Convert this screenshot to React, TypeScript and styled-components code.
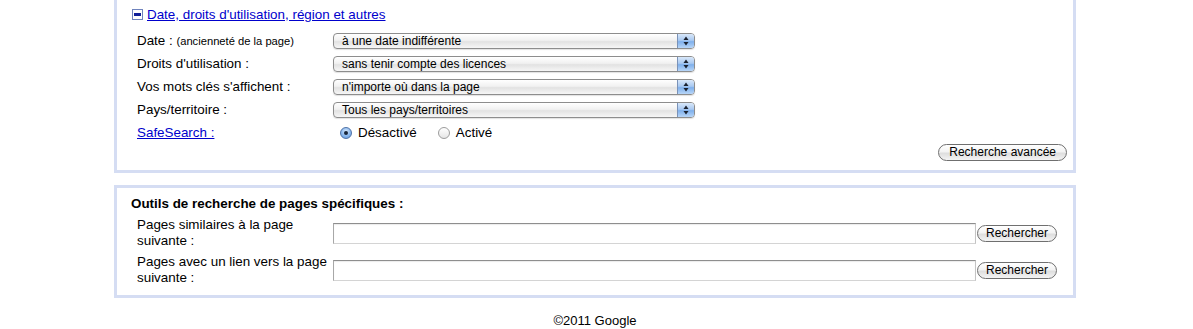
import React from "react";
import styled, { createGlobalStyle } from "styled-components";

const GlobalStyle = createGlobalStyle`
  html, body { margin: 0; padding: 0; background: #fff; }
  body {
    font-family: "Liberation Sans", Arial, sans-serif;
    font-size: 13.4px;
    color: #000;
  }
`;

const Page = styled.div`
  padding: 0 117px 0 114px;
`;

const Panel = styled.section<{ $openTop?: boolean }>`
  border: 3px solid #d5ddf3;
  ${(p) => (p.$openTop ? "border-top: none;" : "")}
  padding: ${(p) => (p.$openTop ? "5px 6px 9px 14px" : "8px 6px 9px 14px")};
  & + & { margin-top: 12px; }
`;

const Toggle = styled.div`
  display: flex;
  align-items: center;
  gap: 4px;
  height: 18px;
  padding-left: 1px;
`;

const Link = styled.a`
  color: #0000cc;
  text-decoration: underline;
  cursor: pointer;
  font-size: 13.4px;
`;

const FieldGrid = styled.div`
  display: grid;
  grid-template-columns: 196px 362px;
  grid-auto-rows: 23px;
  align-items: center;
  margin-top: 6px;
  padding-left: 6px;
`;

const Label = styled.div`
  font-size: 13.4px;
  white-space: nowrap;
`;

const Hint = styled.span`
  font-size: 11.2px;
`;

const SelectBox = styled.div`
  position: relative;
  display: flex;
  align-items: center;
  height: 16px;
  box-sizing: border-box;
  border: 1px solid #8d8d8d;
  border-radius: 4px;
  background: linear-gradient(#ffffff 0%, #f1f1f1 45%, #e2e2e2 55%, #f6f6f6 100%);
  box-shadow: 0 1px 1px rgba(0, 0, 0, 0.12);
  overflow: hidden;
`;

const SelectText = styled.span`
  flex: 1;
  padding-left: 8px;
  font-size: 12px;
  line-height: 14px;
`;

const ArrowBox = styled.span`
  width: 16px;
  height: 100%;
  display: flex;
  align-items: center;
  justify-content: center;
  border-left: 1px solid #7a92b8;
  background: linear-gradient(#d9e8fa 0%, #a9c9f1 45%, #7fb0ec 55%, #b8d6f8 100%);
`;

const RadioRow = styled.div`
  display: flex;
  align-items: center;
  padding-left: 7px;
`;

const RadioLabel = styled.label<{ $gapAfter?: number }>`
  display: flex;
  align-items: center;
  gap: 6px;
  font-size: 13.4px;
  margin-right: ${(p) => p.$gapAfter ?? 0}px;
`;

const RadioDot = styled.span<{ $checked?: boolean }>`
  width: 12px;
  height: 12px;
  box-sizing: border-box;
  border-radius: 50%;
  display: flex;
  align-items: center;
  justify-content: center;
  border: 1px solid ${(p) => (p.$checked ? "#4f73a8" : "#9c9c9c")};
  background: ${(p) =>
    p.$checked
      ? "radial-gradient(circle at 50% 35%, #d9e9fb 0%, #8ab8ee 55%, #5b93d8 100%)"
      : "linear-gradient(#ffffff, #e6e6e6)"};
  &::after {
    content: "";
    width: 4px;
    height: 4px;
    border-radius: 50%;
    background: ${(p) => (p.$checked ? "#17253a" : "transparent")};
  }
`;

const ButtonRow = styled.div`
  display: flex;
  justify-content: flex-end;
`;

const PillButton = styled.button<{ $pad?: number }>`
  height: 17px;
  box-sizing: border-box;
  padding: 0 ${(p) => p.$pad ?? 10}px;
  border: 1px solid #6f6f6f;
  border-radius: 9px;
  background: linear-gradient(#ffffff 0%, #f3f3f3 45%, #dedede 55%, #f4f4f4 100%);
  font-family: "Liberation Sans", Arial, sans-serif;
  font-size: 12px;
  line-height: 15px;
  color: #000;
  cursor: pointer;
`;

const Heading = styled.div`
  font-weight: bold;
  font-size: 13.4px;
  line-height: 16px;
`;

const ToolRow = styled.div`
  display: grid;
  grid-template-columns: 196px 643px auto;
  align-items: center;
  height: 32px;
  padding-left: 6px;
  margin-top: 5px;
`;

const WrapLabel = styled.div`
  font-size: 13.4px;
  line-height: 16px;
`;

const TextInput = styled.input`
  width: 643px;
  height: 21px;
  box-sizing: border-box;
  border: 1px solid;
  border-color: #8e8e8e #c4c4c4 #d4d4d4 #a8a8a8;
  padding: 0 3px;
  margin: 0;
  background: #fff;
  box-shadow: inset 0 1px 1px rgba(0, 0, 0, 0.08);
`;

const ButtonCell = styled.div`
  padding-left: 1px;
`;

const Footer = styled.footer`
  margin-top: 15px;
  text-align: center;
  font-size: 13px;
  line-height: 16px;
`;

const MinusIcon = () => (
  <svg width="11" height="11" viewBox="0 0 11 11" aria-hidden="true">
    <rect x="0.5" y="0.5" width="10" height="10" fill="#fff" stroke="#6f83bd" />
    <rect x="2" y="4" width="7" height="3" fill="#12209a" />
  </svg>
);

const UpDown = () => (
  <svg width="6" height="10" viewBox="0 0 6 10" aria-hidden="true">
    <polygon points="3,0.5 5.5,4 0.5,4" fill="#1b2230" />
    <polygon points="0.5,6 5.5,6 3,9.5" fill="#1b2230" />
  </svg>
);

const FakeSelect = ({ value }: { value: string }) => (
  <SelectBox>
    <SelectText>{value}</SelectText>
    <ArrowBox>
      <UpDown />
    </ArrowBox>
  </SelectBox>
);

const fields: { label: React.ReactNode; value: string }[] = [
  {
    label: (
      <>
        Date : <Hint>(ancienneté de la page)</Hint>
      </>
    ),
    value: "à une date indifférente",
  },
  { label: "Droits d'utilisation :", value: "sans tenir compte des licences" },
  { label: "Vos mots clés s'affichent :", value: "n'importe où dans la page" },
  { label: "Pays/territoire :", value: "Tous les pays/territoires" },
];

const tools = [
  "Pages similaires à la page suivante :",
  "Pages avec un lien vers la page suivante :",
];

export default function App() {
  return (
    <>
      <GlobalStyle />
      <Page>
        <Panel $openTop>
          <Toggle>
            <MinusIcon />
            <Link>Date, droits d'utilisation, région et autres</Link>
          </Toggle>
          <FieldGrid>
            {fields.map((f, i) => (
              <React.Fragment key={i}>
                <Label>{f.label}</Label>
                <FakeSelect value={f.value} />
              </React.Fragment>
            ))}
            <Label>
              <Link>SafeSearch :</Link>
            </Label>
            <RadioRow>
              <RadioLabel $gapAfter={21}>
                <RadioDot $checked />
                Désactivé
              </RadioLabel>
              <RadioLabel>
                <RadioDot />
                Activé
              </RadioLabel>
            </RadioRow>
          </FieldGrid>
          <ButtonRow>
            <PillButton $pad={10}>Recherche avancée</PillButton>
          </ButtonRow>
        </Panel>
        <Panel>
          <Heading>Outils de recherche de pages spécifiques :</Heading>
          {tools.map((t) => (
            <ToolRow key={t}>
              <WrapLabel>{t}</WrapLabel>
              <TextInput type="text" />
              <ButtonCell>
                <PillButton $pad={8}>Rechercher</PillButton>
              </ButtonCell>
            </ToolRow>
          ))}
        </Panel>
        <Footer>©2011 Google</Footer>
      </Page>
    </>
  );
}
